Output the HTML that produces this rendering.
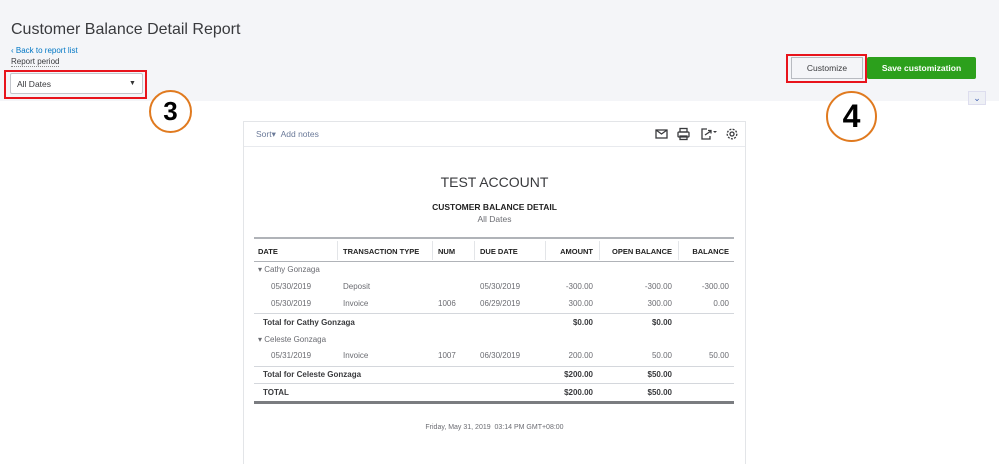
<!DOCTYPE html>
<html><head><meta charset="utf-8"><style>
*{margin:0;padding:0;box-sizing:border-box}
body{width:999px;height:464px;overflow:hidden;background:#fff;font-family:"Liberation Sans",sans-serif;position:relative;color:#393a3d}
.a{position:absolute;white-space:nowrap}
.h{font-size:7.5px;font-weight:bold;color:#222}
.c{font-size:8px;color:#6b6c72}
.b{font-size:8px;font-weight:bold;color:#393a3d}
.r{text-align:right}
.ln{position:absolute;left:254px;width:480px;height:1px;background:#d4d7dc}
.vs{position:absolute;top:241px;width:1px;height:19px;background:#e3e5e8}
</style></head><body>
<div class="a" style="left:0;top:0;width:999px;height:101px;background:#f4f5f8"></div>
<div class="a" style="left:11px;top:21px;font-size:16px;color:#393a3d">Customer Balance Detail Report</div>
<div class="a" style="left:11px;top:46px;font-size:8px;color:#0077c5">‹ Back to report list</div>
<div class="a" style="left:11px;top:57px;font-size:8px;color:#393a3d;border-bottom:1px dotted #888">Report period</div>
<div class="a" style="left:4px;top:70px;width:143px;height:29px;border:2px solid #e8141c"></div>
<div class="a" style="left:10px;top:73px;width:133px;height:21px;background:#fff;border:1px solid #c4c6cc;border-radius:2px"></div>
<div class="a" style="left:17px;top:79px;font-size:8.5px;color:#393a3d">All Dates</div>
<div class="a" style="left:129px;top:80px;font-size:7px;color:#333">▼</div>
<div class="a" style="left:149px;top:90px;width:43px;height:43px;border:2px solid #e07a1f;border-radius:50%;background:#fff;text-align:center;font-size:26px;font-weight:900;line-height:39px;color:#000">3</div>
<div class="a" style="left:786px;top:54px;width:81px;height:29px;border:2px solid #e8141c"></div>
<div class="a" style="left:791px;top:57px;width:72px;height:22px;background:#f4f5f8;border:1px solid #b8bbc1;font-size:8.5px;text-align:center;line-height:20px;color:#393a3d">Customize</div>
<div class="a" style="left:867px;top:57px;width:109px;height:22px;background:#2ca01c;border-radius:2px;color:#fff;font-size:8.5px;font-weight:bold;text-align:center;line-height:22px">Save customization</div>
<div class="a" style="left:968px;top:91px;width:18px;height:14px;background:#eef0f5;border:1px solid #dde;color:#4060b0;font-size:9px;text-align:center;line-height:12px">⌄</div>
<div class="a" style="left:826px;top:91px;width:51px;height:51px;border:2px solid #e07a1f;border-radius:50%;background:#fff;text-align:center;font-size:32px;font-weight:900;line-height:47px;color:#000">4</div>
<div class="a" style="left:243px;top:121px;width:503px;height:343px;border:1px solid #e3e5e8;border-bottom:none;background:#fff"></div>
<div class="a" style="left:244px;top:146px;width:501px;height:1px;background:#e8eaee"></div>
<div class="a" style="left:256px;top:129px;font-size:8.5px;color:#6b7a99">Sort▾ &nbsp;Add notes</div>
<svg class="a" style="left:654px;top:127px" width="86" height="14" viewBox="0 0 86 14" fill="none" stroke="#393a3d" stroke-width="1.3">
<rect x="2" y="3" width="11" height="8"/><path d="M2 3l5.5 4 5.5-4"/>
<rect x="26" y="1.5" width="7" height="3.5"/><rect x="24" y="5" width="11" height="5" rx="1"/><rect x="26" y="9" width="7" height="3.5"/>
<path d="M53 2h-5v10h8v-3"/><path d="M51 8l6-4M54 3.5h3v3"/><path d="M59 4l2 2 2-2z" fill="#393a3d" stroke="none"/>
<circle cx="78" cy="7" r="2"/><circle cx="78" cy="7" r="4.8" stroke-dasharray="2 1.3"/>
</svg>
<div class="a" style="left:244px;top:174px;width:501px;text-align:center;font-size:14px;color:#393a3d">TEST ACCOUNT</div>
<div class="a" style="left:244px;top:202px;width:501px;text-align:center;font-size:8.5px;font-weight:bold;color:#222">CUSTOMER BALANCE DETAIL</div>
<div class="a" style="left:244px;top:214px;width:501px;text-align:center;font-size:8.5px;color:#6b6c72">All Dates</div>
<div class="ln" style="top:237px;height:2px;background:#b0b3b8"></div>
<div class="vs" style="left:337px"></div><div class="vs" style="left:432px"></div><div class="vs" style="left:474px"></div><div class="vs" style="left:545px"></div><div class="vs" style="left:599px"></div><div class="vs" style="left:678px"></div>
<div class="a h" style="left:258px;top:247px">DATE</div>
<div class="a h" style="left:343px;top:247px">TRANSACTION TYPE</div>
<div class="a h" style="left:438px;top:247px">NUM</div>
<div class="a h" style="left:480px;top:247px">DUE DATE</div>
<div class="a h r" style="left:540px;width:53px;top:247px">AMOUNT</div>
<div class="a h r" style="left:600px;width:72px;top:247px">OPEN BALANCE</div>
<div class="a h r" style="left:680px;width:49px;top:247px">BALANCE</div>
<div class="ln" style="top:261px;background:#b0b3b8"></div>
<div class="a c" style="left:258px;top:265px">▾ Cathy Gonzaga</div>
<div class="a c" style="left:271px;top:282px">05/30/2019</div><div class="a c" style="left:343px;top:282px">Deposit</div><div class="a c" style="left:480px;top:282px">05/30/2019</div>
<div class="a c r" style="left:540px;width:53px;top:282px">-300.00</div><div class="a c r" style="left:600px;width:72px;top:282px">-300.00</div><div class="a c r" style="left:680px;width:49px;top:282px">-300.00</div>
<div class="a c" style="left:271px;top:299px">05/30/2019</div><div class="a c" style="left:343px;top:299px">Invoice</div><div class="a c" style="left:438px;top:299px">1006</div><div class="a c" style="left:480px;top:299px">06/29/2019</div>
<div class="a c r" style="left:540px;width:53px;top:299px">300.00</div><div class="a c r" style="left:600px;width:72px;top:299px">300.00</div><div class="a c r" style="left:680px;width:49px;top:299px">0.00</div>
<div class="ln" style="top:313px"></div>
<div class="a b" style="left:263px;top:318px">Total for Cathy Gonzaga</div>
<div class="a b r" style="left:540px;width:53px;top:318px">$0.00</div><div class="a b r" style="left:600px;width:72px;top:318px">$0.00</div>
<div class="a c" style="left:258px;top:335px">▾ Celeste Gonzaga</div>
<div class="a c" style="left:271px;top:351px">05/31/2019</div><div class="a c" style="left:343px;top:351px">Invoice</div><div class="a c" style="left:438px;top:351px">1007</div><div class="a c" style="left:480px;top:351px">06/30/2019</div>
<div class="a c r" style="left:540px;width:53px;top:351px">200.00</div><div class="a c r" style="left:600px;width:72px;top:351px">50.00</div><div class="a c r" style="left:680px;width:49px;top:351px">50.00</div>
<div class="ln" style="top:366px"></div>
<div class="a b" style="left:263px;top:370px">Total for Celeste Gonzaga</div>
<div class="a b r" style="left:540px;width:53px;top:370px">$200.00</div><div class="a b r" style="left:600px;width:72px;top:370px">$50.00</div>
<div class="ln" style="top:383px"></div>
<div class="a b" style="left:263px;top:388px">TOTAL</div>
<div class="a b r" style="left:540px;width:53px;top:388px">$200.00</div><div class="a b r" style="left:600px;width:72px;top:388px">$50.00</div>
<div class="ln" style="top:401px;height:3px;background:#7a7c80"></div>
<div class="a" style="left:244px;top:424px;width:501px;text-align:center;font-size:7px;color:#6b6c72">Friday, May 31, 2019 &nbsp;03:14 PM GMT+08:00</div>
</body></html>
